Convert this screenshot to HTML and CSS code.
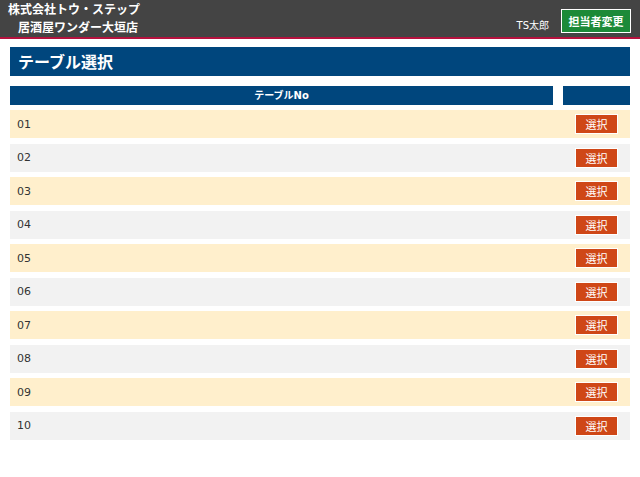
FILE: index.html
```html
<!DOCTYPE html>
<html lang="ja">
<head>
    <meta charset="UTF-8">
    <meta name="viewport" content="width=device-width, initial-scale=1.0">
    <title>テーブル選択</title>
    <link rel="stylesheet" href="styles.css">
</head>
<body>

    <div class="header">
        <div class="shop">
            <div class="company">株式会社トウ・ステップ</div>
            <div class="store">居酒屋ワンダー大垣店</div>
        </div>
        <div class="user">
            <span class="user-name">TS太郎</span>
            <button class="change-btn">担当者変更</button>
        </div>
    </div>

    <div class="main">
        <h1 class="title">テーブル選択</h1>

        <div class="table-head">
            <div class="head-no">テーブルNo</div>
            <div class="head-action"></div>
        </div>

        <div class="rows">
            <div class="row odd"><span class="no">01</span><button class="select-btn">選択</button></div>
            <div class="row even"><span class="no">02</span><button class="select-btn">選択</button></div>
            <div class="row odd"><span class="no">03</span><button class="select-btn">選択</button></div>
            <div class="row even"><span class="no">04</span><button class="select-btn">選択</button></div>
            <div class="row odd"><span class="no">05</span><button class="select-btn">選択</button></div>
            <div class="row even"><span class="no">06</span><button class="select-btn">選択</button></div>
            <div class="row odd"><span class="no">07</span><button class="select-btn">選択</button></div>
            <div class="row even"><span class="no">08</span><button class="select-btn">選択</button></div>
            <div class="row odd"><span class="no">09</span><button class="select-btn">選択</button></div>
            <div class="row even"><span class="no">10</span><button class="select-btn">選択</button></div>
        </div>
    </div>

</body>
</html>
```

FILE: styles.css
```css
body {
    margin: 0;
    font-family: "DejaVu Sans", "Noto Sans CJK JP", sans-serif;
    background-color: #fff;
    color: #333;
}
.header {
    height: 37px;
    background-color: #444;
    border-bottom: 2px solid #b5123e;
    display: flex;
    justify-content: space-between;
    align-items: flex-start;
    color: #fff;
}
.shop {
    padding-left: 8px;
    font-family: "Noto Sans CJK JP", sans-serif;
    font-size: 12px;
    font-weight: bold;
    line-height: 18px;
}
.store {
    padding-left: 10px;
}
.user {
    display: flex;
    align-items: center;
    padding: 9px 9px 0 0;
}
.user-name {
    font-size: 10px;
    margin: 6px 12px 0 0;
}
.change-btn {
    width: 70px;
    height: 24px;
    padding: 0;
    background-color: #1c8a38;
    border: 1px solid #fff;
    color: #fff;
    font-family: "Noto Sans CJK JP", sans-serif;
    font-size: 11px;
    font-weight: bold;
}
.main {
    padding: 0 10px;
}
.title {
    margin: 8px 0 0;
    height: 29px;
    background-color: #00467d;
    color: #fff;
    font-family: "Noto Sans CJK JP", sans-serif;
    font-size: 16px;
    font-weight: bold;
    line-height: 29px;
    padding-left: 8px;
}
.table-head {
    display: flex;
    gap: 10px;
    margin-top: 10px;
    height: 19px;
}
.head-no,
.head-action {
    background-color: #00467d;
    color: #fff;
    font-size: 10px;
    font-weight: bold;
    line-height: 19px;
    text-align: center;
}
.head-no {
    flex: 1;
}
.head-action {
    width: 67px;
}
.rows {
    display: flex;
    flex-direction: column;
    gap: 5.5px;
    margin-top: 5px;
}
.row {
    height: 28px;
    display: flex;
    align-items: center;
    justify-content: space-between;
    padding: 0 12px 0 7px;
    font-size: 11px;
}
.odd {
    background-color: #ffefcc;
}
.even {
    background-color: #f2f2f2;
}
.select-btn {
    width: 43px;
    height: 20px;
    padding: 0;
    background-color: #cf4717;
    border: 1px solid #fff;
    color: #fff;
    font-family: "Noto Sans CJK JP", sans-serif;
    font-size: 11px;
}
```
